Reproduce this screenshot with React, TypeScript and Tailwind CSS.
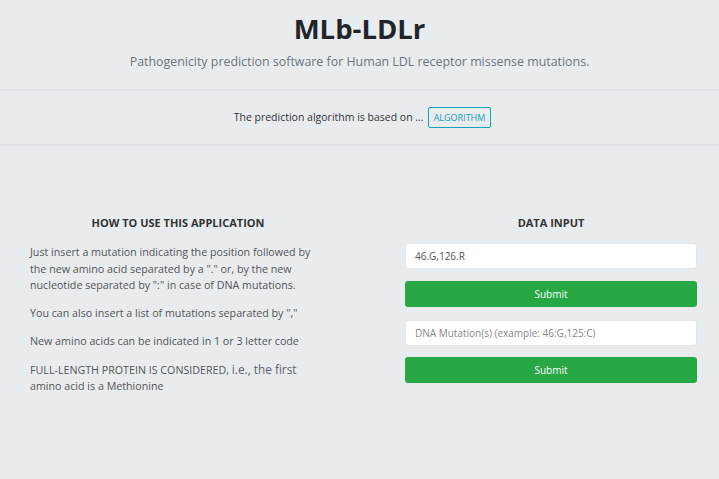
import React, { useState } from 'react'

const FONT = "font-['Open_Sans','Noto_Sans',sans-serif]"

function HowTo() {
  return (
    <div className="flex w-[296px] flex-col">
      <h3 className="text-center text-[11px] font-bold leading-[16px] text-[#333]">
        HOW TO USE THIS APPLICATION
      </h3>
      <div className="mt-[13px] flex flex-col gap-[11px] text-[10.7px] leading-[16.7px] text-[#555]">
        <p>
          Just insert a mutation indicating the position followed by the new amino acid
          separated by a "." or, by the new nucleotide separated by ":" in case of DNA
          mutations.
        </p>
        <p>You can also insert a list of mutations separated by ","</p>
        <p>New amino acids can be indicated in 1 or 3 letter code</p>
        <p className="w-[290px]">
          FULL-LENGTH PROTEIN IS CONSIDERED, <span className="text-[11.8px] text-[#5d6470]">i.e., the first</span>{' '}
          amino acid is a Methionine
        </p>
      </div>
    </div>
  )
}

function DataInput() {
  const [protein, setProtein] = useState('46.G,126.R')
  const [dna, setDna] = useState('')

  return (
    <div className="flex w-[292px] flex-col">
      <h3 className="text-center text-[11px] font-bold leading-[16px] text-[#333]">DATA INPUT</h3>
      <input
        value={protein}
        onChange={(e) => setProtein(e.target.value)}
        className="mt-[12px] h-[26px] rounded-[3px] border border-[#e3e6ea] bg-white px-[9px] text-[10px] text-[#555] outline-none"
      />
      <button className="mt-[12px] h-[26px] rounded-[3px] bg-[#28a745] text-[10px] font-medium text-white">
        Submit
      </button>
      <input
        value={dna}
        onChange={(e) => setDna(e.target.value)}
        placeholder="DNA Mutation(s) (example: 46:G,125:C)"
        className="mt-[13px] h-[26px] rounded-[3px] border border-[#e3e6ea] bg-white px-[9px] text-[10px] text-[#555] outline-none placeholder:text-[#888]"
      />
      <button className="mt-[11px] h-[26px] rounded-[3px] bg-[#28a745] text-[10px] font-medium text-white">
        Submit
      </button>
    </div>
  )
}

export default function App() {
  return (
    <div className={`h-[479px] w-full overflow-hidden bg-[#e9ecef] ${FONT}`}>
      {/* Header */}
      <header className="flex h-[89px] flex-col items-center pt-[10px]">
        <h1 className="text-[27.5px] font-bold leading-[38px] text-[#212529]">MLb-LDLr</h1>
        <p className="mt-[5px] text-[12.4px] leading-[18px] text-[#6c757d]">
          Pathogenicity prediction software for Human LDL receptor missense mutations.
        </p>
      </header>

      {/* Algorithm bar */}
      <div className="flex h-[57px] items-center justify-center gap-[4px] border-y-2 border-[#dee2e6] pl-[6px]">
        <span className="text-[10.5px] text-[#333]">The prediction algorithm is based on ...</span>
        <button className="h-[21px] rounded-[2px] border border-[#17a2b8] px-[5px] text-[9px] text-[#17a2b8]">
          ALGORITHM
        </button>
      </div>

      {/* Main */}
      <div className="flex justify-between pl-[30px] pr-[22px] pt-[69px]">
        <HowTo />
        <DataInput />
      </div>
    </div>
  )
}
